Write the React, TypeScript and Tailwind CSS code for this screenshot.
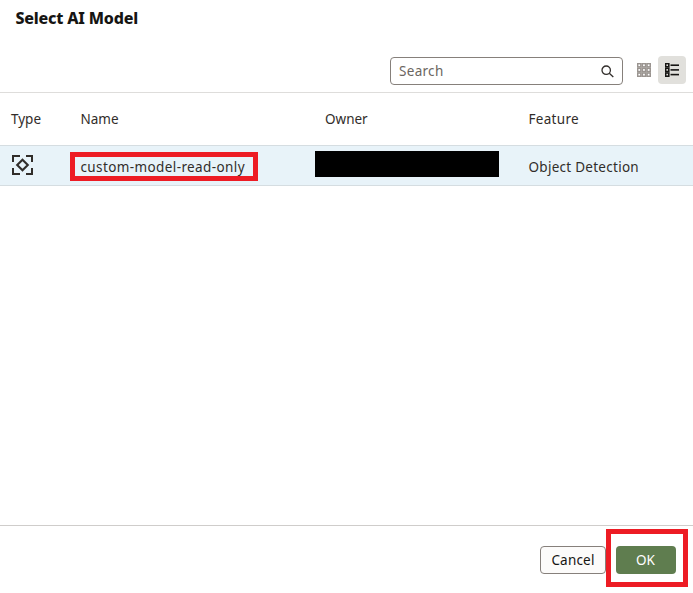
function SearchIcon() {
  return (
    <svg width="13" height="13" viewBox="0 0 13 13" fill="none" stroke="#312d2a" strokeWidth="1.3">
      <circle cx="5.2" cy="5.2" r="4.2" />
      <path d="M8.3 8.3 12.3 12" />
    </svg>
  );
}

function GridIcon() {
  return (
    <svg width="14" height="14" viewBox="0 0 14 14" fill="none" stroke="#9a9490" strokeWidth="1.6">
      {[0, 4.7, 9.4].map((y) =>
        [0, 4.7, 9.4].map((x) => <rect key={`${x}-${y}`} x={x + 0.6} y={y + 0.6} width="3.3" height="3.3" />),
      )}
    </svg>
  );
}

function ListIcon() {
  return (
    <svg width="14" height="14" viewBox="0 0 14 14" fill="none" stroke="#161513" strokeWidth="1.6">
      {[0, 4.7, 9.4].map((y) => (
        <g key={y}>
          <rect x="0.6" y={y + 0.6} width="3.2" height="3.2" />
          <path d={`M5.5 ${y + 2.2}H14`} />
        </g>
      ))}
    </svg>
  );
}

function DetectionIcon() {
  return (
    <svg width="22" height="20" viewBox="0 0 22 20" fill="none" stroke="#312d2a" strokeWidth="2">
      <path d="M1 7V1h7M14 1h6v6M20 13v6h-6M8 19H1v-6" />
      <path d="M10.5 4.7 15.8 10 10.5 15.3 5.2 10Z" strokeWidth="2.1" />
    </svg>
  );
}

export default function App() {
  return (
    <div className="flex h-[593px] w-[693px] flex-col overflow-hidden bg-white font-['Noto_Sans',sans-serif] text-[13.5px] leading-5 text-[#312d2a]">
      <h1 className="h-[57px] shrink-0 pt-[8px] pl-[15.5px] text-[16px] leading-5 font-extrabold tracking-[-0.2px] text-[#161513]">
        Select AI Model
      </h1>
      <div className="flex h-[36px] shrink-0 border-b border-[#dedddb] pl-[390px]">
        <div className="flex h-[28px] w-[233px] items-center justify-between rounded border border-[#86807b] px-[8px] text-[#6b6661]">
          <span className="tracking-[0.3px]">Search</span>
          <SearchIcon />
        </div>
        <div className="-mt-px ml-[7px] flex h-[28px] w-[28px] items-center justify-center">
          <GridIcon />
        </div>
        <div className="-mt-px flex h-[28px] w-[28px] items-center justify-center rounded bg-[#e1e0dc]">
          <ListIcon />
        </div>
      </div>
      <div className="flex h-[53px] shrink-0 items-center border-b border-[#d5dde1]">
        <span className="w-[70px] pl-[11px]">Type</span>
        <span className="w-[245px] pl-[10.5px]">Name</span>
        <span className="w-[204px] pl-[10px]">Owner</span>
        <span className="pl-[9.5px] tracking-[0.3px]">Feature</span>
      </div>
      <div className="flex h-[40px] shrink-0 items-start border-b border-[#d5dde1] bg-[#e8f3f9]">
        <div className="w-[70px] pt-[9px] pl-[12px]">
          <DetectionIcon />
        </div>
        <div className="mt-[6px] flex h-[29px] w-[188px] items-center border-5 border-[#ed1c24] pt-[1px] pl-[5.5px]">
          <span className="tracking-[0.39px]">custom-model-read-only</span>
        </div>
        <div className="mt-[5px] ml-[57px] h-[26px] w-[184px] bg-black" />
        <span className="mt-[11px] ml-[29.5px] tracking-[0.27px]">Object Detection</span>
      </div>
      <main className="flex-1" />
      <footer className="flex h-[68px] shrink-0 items-start border-t border-[#cfcdcb] pl-[540px]">
        <button className="mt-[20px] h-[28px] w-[66px] rounded border border-[#86807b] bg-[#fcfbfa] text-[#161513] tracking-[0.2px]">
          Cancel
        </button>
        <div className="mt-[3px] flex h-[58px] w-[82px] justify-center border-5 border-[#ed1c24] pt-[12px] pr-[2px]">
          <button className="h-[28px] w-[60px] rounded bg-[#5f7d4f] pr-[1px] text-white">OK</button>
        </div>
      </footer>
    </div>
  );
}
